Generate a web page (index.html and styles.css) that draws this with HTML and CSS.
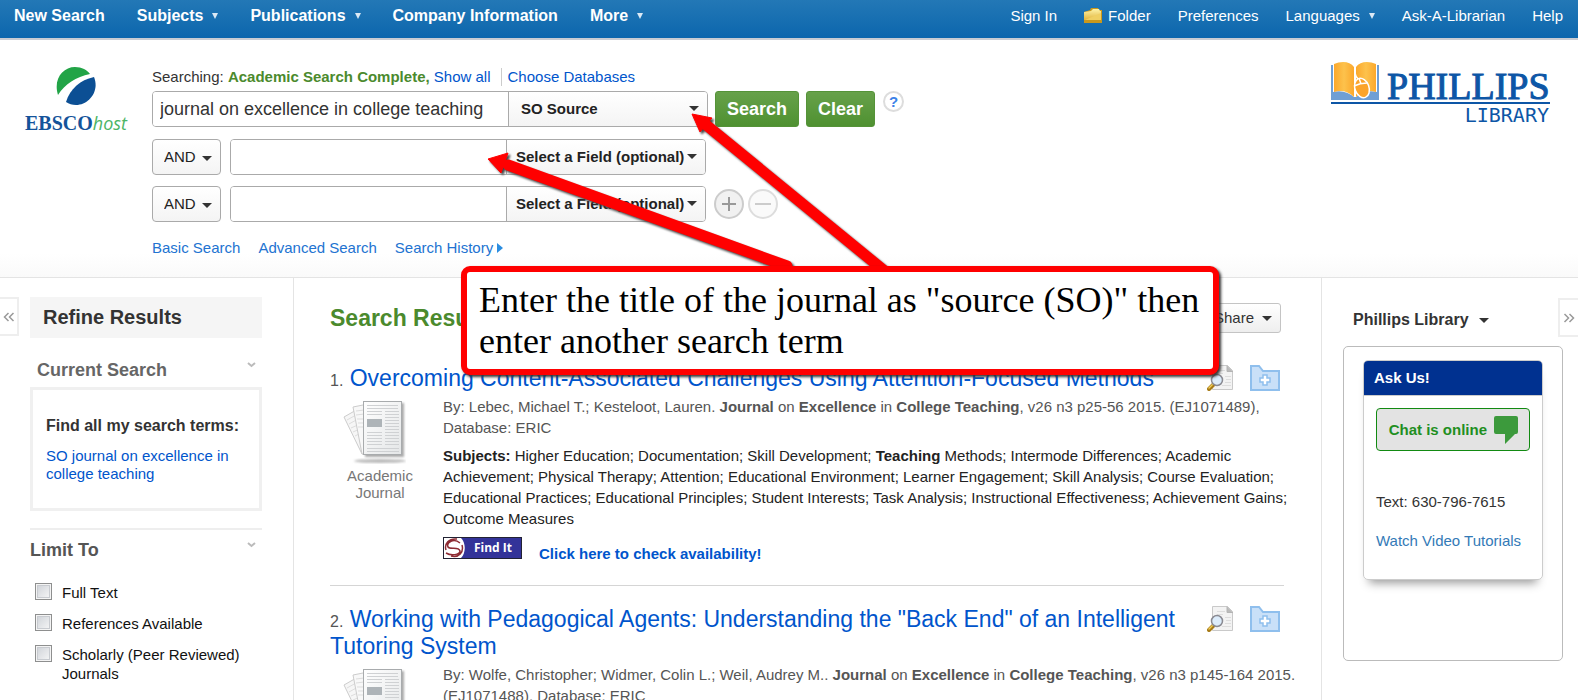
FILE: index.html
```html
<!DOCTYPE html>
<html lang="en">
<head>
<meta charset="utf-8">
<title>Search Results - EBSCOhost</title>
<link rel="stylesheet" href="styles.css">
</head>
<body>
<svg class="defs" width="0" height="0" aria-hidden="true">
  <defs>
    <linearGradient id="paper" x1="0" y1="0" x2="1" y2="1"><stop offset="0" stop-color="#fff"/><stop offset="1" stop-color="#e4e6e7"/></linearGradient>
    <linearGradient id="gold" x1="0" y1="0" x2="0" y2="1"><stop offset="0" stop-color="#fdf3a8"/><stop offset="1" stop-color="#e2b43a"/></linearGradient>
    <linearGradient id="amber" x1="0" y1="0" x2="1" y2="0"><stop offset="0" stop-color="#fba82d"/><stop offset=".5" stop-color="#fdc24c"/><stop offset="1" stop-color="#fba82d"/></linearGradient>
    <filter id="soft" x="-20%" y="-20%" width="140%" height="140%"><feGaussianBlur stdDeviation="1"/></filter>
    <symbol id="journal" viewBox="0 0 64 64">
      <ellipse cx="38" cy="61" rx="26" ry="2" fill="#bbb" filter="url(#soft)"/>
      <path d="M2 17 16 9 32 51 20 54Z" fill="#f6f6f6" stroke="#ccc"/>
      <path d="M5 20l9-5M7 24l9-5M9 28l9-4M11 32l9-4M13 36l8-4" stroke="#ddd"/>
      <path d="M11 7 26 4 32 53 20 54Z" fill="#f8f8f8" stroke="#ccc"/>
      <path d="M14 11l8-1M14 15l8-1M15 19h8M16 23h8M16 27h8" stroke="#ddd"/>
      <rect x="23" y="3" width="39" height="54" fill="#aaa" filter="url(#soft)"/>
      <rect x="21.5" y="1.500" width="38" height="53" fill="url(#paper)" stroke="#a8abad"/>
      <path d="M25 5.500h31M25 8.500h31M25 11.500h15M25 14.500h15M25 32.500h15M25 35.500h15M25 38.500h15M25 41.500h15M25 44.500h15M43 11.500h14M43 14.500h14M43 17.500h14M43 20.500h14M43 23.500h14M43 26.500h14M43 29.500h14M43 32.500h14M43 35.500h14M43 38.500h14M43 41.500h14M43 44.500h14M25 48.500h32M25 51.500h32" stroke="#cfd1d3"/>
      <rect x="25" y="19" width="15" height="8" fill="#aeb4b8"/>
    </symbol>
    <symbol id="preview" viewBox="0 0 27 26">
      <path d="M5.500.5h15l5 5v19h-20Z" fill="#f3f3f3" stroke="#c9c9c9"/>
      <path d="M20 .5v6h6" fill="#bbb" stroke="#b4b4b4"/>
      <path d="M10 5.500h8M10 8.500h6M18 11.500h6M19 14.500h5M18 17.500h6M15 20.500h9" stroke="#ddd"/>
      <path d="M7 19 2 24" stroke="#a77b16" stroke-width="4" stroke-linecap="round"/>
      <path d="M6.500 18.500 2 23" stroke="#f0cd5a" stroke-width="1.500" stroke-linecap="round"/>
      <circle cx="10" cy="15" r="5.500" fill="#dcecfb" stroke="#8a8a92" stroke-width="1.500"/>
    </symbol>
    <symbol id="add-folder" viewBox="0 0 30 26">
      <path d="M1 1h8l4 5h16v19H1Z" fill="#c9e0f8" stroke="#8fbfed" stroke-width="2"/>
      <path d="M13 10h4v3h3v4h-3v3h-4v-3h-3v-4h3Z" fill="#fff" stroke="#8fbfed" stroke-width="1.500"/>
    </symbol>
  </defs>
</svg>
<div class="page">
  <nav class="topbar">
    <div class="topbar-group">
      <a href="#">New Search</a>
      <a href="#">Subjects<span class="tri"></span></a>
      <a href="#">Publications<span class="tri"></span></a>
      <a href="#">Company Information</a>
      <a href="#">More<span class="tri"></span></a>
    </div>
    <div class="topbar-group tools">
      <a href="#">Sign In</a>
      <a href="#" class="folder"><svg width="18" height="17" viewBox="0 0 18 17"><path d="M0 5 6 3l1-2h7l1 2h3v13H0Z" fill="#c9981c"/><path d="M0 5 7 4l2-2h6l1 2h1v9H0Z" fill="url(#gold)"/><path d="M1 13 17 6v7Z" fill="#efcf62"/></svg>Folder</a>
      <a href="#">Preferences</a>
      <a href="#">Languages<span class="tri"></span></a>
      <a href="#">Ask-A-Librarian</a>
      <a href="#">Help</a>
    </div>
  </nav>

  <header class="header">
    <a href="#" class="ebsco" aria-label="EBSCOhost">
      <svg width="40" height="40" viewBox="0 0 40 40"><path d="M2 29C-3 13 7 1 19 1c7 0 12 3 15 7C20 11 9 18 2 29Z" fill="#22a447"/><path d="M38 11c6 15-6 28-18 28-4 0-7-1-10-3 4-13 14-22 28-25Z" fill="#0c4f94"/></svg>
      <span class="ebsco-name"><b>EBSCO</b><i>host</i></span>
    </a>
    <form class="search">
      <div class="databases"><span>Searching: <strong>Academic Search Complete,</strong> <a href="#">Show all</a></span><a href="#" class="choose">Choose Databases</a></div>
      <div class="row">
        <div class="combo first">
          <input type="text" aria-label="Search term 1" value="journal on excellence in college teaching">
          <span class="pick"><select aria-label="Field 1"><option>SO Source</option></select></span>
        </div>
        <button type="submit" class="go">Search</button>
        <button type="reset" class="go">Clear</button>
        <button type="button" class="help" aria-label="Help">?</button>
      </div>
      <div class="row">
        <span class="pick bool"><select aria-label="Operator 2"><option>AND</option></select></span>
        <div class="combo">
          <input type="text" aria-label="Search term 2">
          <span class="pick"><select aria-label="Field 2"><option>Select a Field (optional)</option></select></span>
        </div>
      </div>
      <div class="row">
        <span class="pick bool"><select aria-label="Operator 3"><option>AND</option></select></span>
        <div class="combo">
          <input type="text" aria-label="Search term 3">
          <span class="pick"><select aria-label="Field 3"><option>Select a Field (optional)</option></select></span>
        </div>
        <button type="button" class="round" aria-label="Add row"><svg width="16" height="16" viewBox="0 0 16 16"><path d="M8 1v14M1 8h14" stroke="#999" stroke-width="2"/></svg></button>
        <button type="button" class="round off" aria-label="Remove row" disabled><svg width="16" height="16" viewBox="0 0 16 16"><path d="M0 8h16" stroke="#ccc" stroke-width="2"/></svg></button>
      </div>
      <div class="modes"><a href="#">Basic Search</a><a href="#">Advanced Search</a><a href="#">Search History<span class="right-tri"></span></a></div>
    </form>
    <a href="#" class="phillips" aria-label="Phillips Library">
      <svg width="220" height="68" viewBox="0 0 220 68">
        <path d="M0 3h48v35H0Z" fill="#6f9fd4"/>
        <path d="M2 1h44v34H2Z" fill="#fff"/>
        <path d="M2 30c8-2 16 0 22 6 6-6 14-8 22-6v8H2Z" fill="#6f9fd4"/>
        <path d="M3 2c7-3 16-3 20 3v30C17 29 10 28 3 30Z" fill="url(#amber)"/>
        <path d="M45 2c-7-3-16-3-20 3v30c6-6 13-7 20-5Z" fill="url(#amber)"/>
        <path d="M24 4c-1 6 0 10 3 13" fill="none" stroke="#fff" stroke-width="1.500"/>
        <ellipse cx="31" cy="26" rx="7" ry="10" transform="rotate(-20 31 26)" fill="#fba42a" stroke="#fff" stroke-width="1.500"/>
        <path d="M23 24c4-2 8-3 13-3M28 16l2 6" fill="none" stroke="#fff" stroke-width="1.500"/>
        <path d="M0 41h219" stroke="#0d56a6" stroke-width="2"/>
        <text x="56" y="37" class="logo-serif">PHILLIPS</text>
        <text x="218" y="60" class="logo-sans">LIBRARY</text>
      </svg>
    </a>
  </header>

  <div class="columns">
    <aside class="sidebar">
      <button type="button" class="tab" aria-label="Hide panel"><svg width="12" height="10" viewBox="0 0 12 10"><path d="M5.500 1 1.500 5l4 4M10.500 1l-4 4 4 4" fill="none" stroke="#999" stroke-width="1.500"/></svg></button>
      <div class="refine">
        <h2 class="refine-title">Refine Results</h2>
        <h3 class="facet inset">Current Search<svg width="9" height="6" viewBox="0 0 9 6"><path d="M1 1l3.500 3L8 1" fill="none" stroke="#bbb" stroke-width="2"/></svg></h3>
        <div class="terms">
          <h4>Find all my search terms:</h4>
          <a href="#">SO journal on excellence in college teaching</a>
        </div>
        <h3 class="facet limit">Limit To<svg width="9" height="6" viewBox="0 0 9 6"><path d="M1 1l3.500 3L8 1" fill="none" stroke="#bbb" stroke-width="2"/></svg></h3>
        <div class="checks">
          <label><input type="checkbox">Full Text</label>
          <label><input type="checkbox">References Available</label>
          <label><input type="checkbox">Scholarly (Peer Reviewed) Journals</label>
        </div>
      </div>
    </aside>

    <main class="results">
      <div class="results-head"><h1>Search Results</h1><button type="button" class="share">Share<span class="caret"></span></button></div>
      <article class="result">
        <div class="title-row">
          <h2><span class="num">1.</span> <a href="#">Overcoming Content-Associated Challenges Using Attention-Focused Methods</a></h2>
          <div class="acts"><a href="#" aria-label="Preview"><svg width="27" height="26"><use href="#preview"/></svg></a><a href="#" aria-label="Add to folder"><svg width="30" height="26"><use href="#add-folder"/></svg></a></div>
        </div>
        <div class="body">
          <div class="kind"><svg width="64" height="64"><use href="#journal"/></svg>Academic<br>Journal</div>
          <div class="detail">
            <p class="by">By: Lebec, Michael T.; Kesteloot, Lauren. <b>Journal</b> on <b>Excellence</b> in <b>College</b> <b>Teaching</b>, v26 n3 p25-56 2015. (EJ1071489), Database: ERIC</p>
            <p class="subjects"><b>Subjects:</b> Higher Education; Documentation; Skill Development; <b>Teaching</b> Methods; Intermode Differences; Academic Achievement; Physical Therapy; Attention; Educational Environment; Learner Engagement; Skill Analysis; Course Evaluation; Educational Practices; Educational Principles; Student Interests; Task Analysis; Instructional Effectiveness; Achievement Gains; Outcome Measures</p>
            <div class="find"><a href="#" class="findit"><svg width="21" height="20" viewBox="0 0 21 20"><path d="M0 0h17c5 5 5 15 0 20H0Z" fill="#fff"/><path d="M16 5C10 0 2 4 4 9c2 3 11-1 12 4 0 4-9 5-14 2M13 1C5 0 0 6 2 12M7 18c8 2 13-4 11-11" fill="none" stroke="#8d2b33" stroke-width="1.500"/></svg><span>Find It</span></a><a href="#" class="avail">Click here to check availability!</a></div>
          </div>
        </div>
      </article>
      <article class="result">
        <div class="title-row">
          <h2><span class="num">2.</span> <a href="#">Working with Pedagogical Agents: Understanding the "Back End" of an Intelligent Tutoring System</a></h2>
          <div class="acts"><a href="#" aria-label="Preview"><svg width="27" height="26"><use href="#preview"/></svg></a><a href="#" aria-label="Add to folder"><svg width="30" height="26"><use href="#add-folder"/></svg></a></div>
        </div>
        <div class="body">
          <div class="kind"><svg width="64" height="64"><use href="#journal"/></svg></div>
          <div class="detail">
            <p class="by">By: Wolfe, Christopher; Widmer, Colin L.; Weil, Audrey M.. <b>Journal</b> on <b>Excellence</b> in <b>College</b> <b>Teaching</b>, v26 n3 p145-164 2015. (EJ1071488), Database: ERIC</p>
          </div>
        </div>
      </article>
    </main>

    <aside class="library">
      <div class="library-head"><h2>Phillips Library<span class="caret"></span></h2><button type="button" class="tab" aria-label="Hide panel"><svg width="12" height="10" viewBox="0 0 12 10"><path d="M1.500 1l4 4-4 4M6.500 1l4 4-4 4" fill="none" stroke="#999" stroke-width="1.500"/></svg></button></div>
      <div class="widget">
        <section class="ask">
          <h3>Ask Us!</h3>
          <div class="ask-body">
            <button type="button" class="chat">Chat is online<svg width="24" height="28" viewBox="0 0 24 28"><path d="M2 0h20q2 0 2 2v14q0 2-2 2h-1L11 28V18H2q-2 0-2-2V2q0-2 2-2Z" fill="#3c9a3c"/></svg></button>
            <p>Text: 630-796-7615</p>
            <a href="#">Watch Video Tutorials</a>
          </div>
        </section>
      </div>
    </aside>
  </div>

  <svg class="arrows" width="440" height="180" viewBox="0 0 440 180" aria-hidden="true">
    <g fill="#f00" stroke="#f00">
      <path d="M245 14 438 172" stroke-width="11"/>
      <path d="M48 55 327 156" stroke-width="11" stroke-linecap="round"/>
      <path d="M232 4l20 4-12 14Z" stroke-linejoin="round"/>
      <path d="M28 49 48 43 41 63Z" stroke-linejoin="round"/>
    </g>
  </svg>
  <div class="callout">Enter the title of the journal as "source (SO)" then enter another search term</div>
</div>
</body>
</html>
```
FILE: styles.css
```css
* { box-sizing: border-box; }
body { margin: 0; background: #fff; color: #333; font: 15px/18px "Liberation Sans", Arial, sans-serif; }
h1, h2, h3, h4, p { margin: 0; }
a { color: #05c; text-decoration: none; }
button, input, select { font: inherit; color: inherit; margin: 0; }
svg { display: block; }
.defs { position: absolute; }
.page { position: relative; height: 100vh; overflow: hidden; }

.topbar { display: flex; justify-content: space-between; height: 40px; padding: 7px 15px 0 14px; background: linear-gradient(#2378b6, #0c66ad); border-bottom: 2px solid #c9ccd3; }
.topbar-group { display: flex; gap: 32px; font-size: 16px; font-weight: bold; }
.topbar a { display: flex; height: 18px; color: #fff; white-space: nowrap; }
.topbar .tools { gap: 27px; font-size: 15px; font-weight: normal; }
.topbar .folder { gap: 6px; }
.tri { align-self: center; margin-left: 9px; border: solid transparent; border-width: 6px 3px 0; border-top-color: #dbe9f5; }

.header { display: flex; height: 238px; padding: 22px 27px 0 25px; background: linear-gradient(#fff 90%, #fafafa); border-bottom: 1px solid #e4e4e4; }
.ebsco { display: flex; flex-direction: column; align-items: center; width: 102px; margin-right: 25px; padding-top: 4px; }
.ebsco-name { margin-top: 5px; font: 20px/24px "Liberation Serif", serif; color: #14539a; }
.ebsco-name i { font: italic 18px/24px "Open Sans", sans-serif; color: #4cb565; }
.search { flex: 1; }
.databases { display: flex; align-items: center; height: 29px; padding-top: 1px; white-space: nowrap; }
.databases strong { color: #4b8a2d; }
.choose { margin-left: 10px; padding-left: 6px; border-left: 1px solid #ccc; }
.row { display: flex; height: 36px; margin-bottom: 12px; }
.row + .row { margin-bottom: 11px; }
.combo { display: flex; width: 476px; border: 1px solid #aaa; border-radius: 4px; background: #fff; overflow: hidden; }
.combo.first { width: 556px; margin-right: 7px; }
.combo input { flex: 1; min-width: 0; padding: 0 7px; border: 0; font-size: 18px; outline: 0; }
.combo .pick { width: 199px; border-left: 1px solid #aaa; }
.pick { position: relative; display: flex; background: linear-gradient(#fff, #f4f4f4); }
.pick::after { content: ""; position: absolute; right: 8px; top: 14px; border: solid transparent; border-width: 5px 5px 0; border-top-color: #333; pointer-events: none; }
.pick select { flex: 1; min-width: 0; padding: 0 9px; border: 0; appearance: none; background: none; font-weight: bold; color: #222; }
.first .pick select { padding-left: 12px; }
.bool { width: 69px; margin-right: 9px; border: 1px solid #aaa; border-radius: 4px; }
.bool::after { top: 16px; }
.bool select { padding: 0 0 0 11px; font-weight: normal; }
.go { margin-right: 7px; padding: 0 11px; border: 1px solid #559338; border-radius: 3px; background: linear-gradient(#67a14a, #4f9131); color: #fff; font-size: 18px; font-weight: bold; }
.help { width: 21px; height: 21px; margin-left: 1px; padding: 0; border: 2px solid #ddd; border-radius: 50%; background: #fff; color: #3b82e8; font-weight: bold; line-height: 16px; }
.round { display: grid; place-items: center; align-self: center; width: 30px; height: 30px; margin-left: 8px; padding: 0; border: 2px solid #ccc; border-radius: 50%; background: #f1f1f1; }
.round.off { margin-left: 4px; border-color: #ddd; background: #fafafa; }
.modes { display: flex; gap: 18px; padding-top: 6px; }
.modes a { display: flex; align-items: center; color: #2273d1; }
.right-tri { margin-left: 4px; border: solid transparent; border-width: 5px 0 5px 6px; border-left-color: #2b8de0; }
.logo-serif { font: 38px "Liberation Serif", serif; fill: #0d56a6; stroke: #0d56a6; stroke-width: 1px; }
.logo-sans { font: 20px "DejaVu Sans Mono", monospace; fill: #0d56a6; text-anchor: end; }

.columns { display: grid; grid-template-columns: 294px 1fr 257px; height: 100%; }
.sidebar { display: flex; align-items: flex-start; gap: 11px; padding: 19px 31px 0 0; border-right: 1px solid #e4e4e4; }
.tab { display: grid; place-items: center; width: 19px; height: 39px; padding: 0; border: 2px solid #eee; border-left: 0; background: #fff; }
.refine { flex: 1; }
.refine-title { padding: 0 13px; background: #f5f5f5; font-size: 20px; line-height: 41px; }
.facet { display: flex; justify-content: space-between; padding: 20px 6px 5px 0; color: #555; font-size: 18px; line-height: 24px; }
.facet.inset { padding-left: 7px; color: #666; }
.facet svg { margin-top: 4px; }
.facet.limit { margin-top: 17px; padding: 8px 6px 0 0; border-top: 2px solid #eee; }
.terms { height: 124px; padding: 26px 13px; border: 3px solid #f0f0f0; }
.terms h4 { margin-bottom: 11px; font-size: 16px; line-height: 20px; white-space: nowrap; }
.terms a { display: block; }
.checks { display: flex; flex-direction: column; gap: 12px; padding: 21px 0 0 5px; color: #111; }
.checks label { display: flex; gap: 10px; line-height: 19px; }
.checks input { flex: none; width: 17px; height: 17px; margin: 0; appearance: none; border: 1px solid #8e8f8f; background: linear-gradient(135deg, #ccd0d6, #f8f8f8); box-shadow: inset 0 0 0 1px #f4f4f4, inset 0 0 0 2px #c8cbd0; }

.results { padding: 25px 37px 0 36px; }
.results-head { display: flex; justify-content: space-between; padding-right: 3px; }
.results-head h1 { color: #4b8a2d; font-size: 23px; line-height: 30px; }
.share { display: flex; align-items: center; height: 30px; padding: 0 8px; border: 1px solid #c4c4c4; border-radius: 3px; background: linear-gradient(#fff, #eee); }
.caret { display: inline-block; margin-left: 8px; border: solid transparent; border-width: 5px 5px 0; border-top-color: #333; }
.result { padding: 32px 0 21px; border-bottom: 1px solid #d5d5d5; }
.result + .result { padding-top: 20px; border: 0; }
.title-row { display: flex; justify-content: space-between; }
.title-row h2 { font-size: 23px; font-weight: normal; line-height: 27px; }
.num { color: #555; font-size: 16px; line-height: 16px; }
.acts { flex: none; display: flex; gap: 16px; padding-right: 4px; }
.body { display: flex; margin-top: 4px; }
.kind { width: 100px; margin-right: 13px; padding: 4px 0 0; text-align: center; color: #777; line-height: 17px; }
.kind svg { margin: 0 0 3px 12px; }
.detail { flex: 1; margin-right: -20px; line-height: 21px; }
.by { color: #555; }
.subjects { margin-top: 7px; color: #222; }
.find { display: flex; align-items: flex-start; gap: 17px; margin-top: 8px; font-weight: bold; }
.findit { display: flex; align-items: center; width: 79px; height: 22px; border: 1px solid #223; background: #333399; color: #fff; font: bold 12px/20px "Open Sans", sans-serif; }
.findit span { flex: 1; text-align: center; }
.avail { padding-top: 6px; }

.library { padding: 20px 0 0 21px; border-left: 1px solid #e4e4e4; }
.library-head { display: flex; justify-content: space-between; margin-bottom: 4px; padding-left: 10px; }
.library-head h2 { font-size: 16px; line-height: 44px; }
.library-head .caret { margin-left: 10px; vertical-align: middle; }
.library .tab { width: 20px; border: 2px solid #eee; border-right: 0; }
.widget { height: 315px; margin-right: 15px; padding: 13px 19px; border: 1px solid #bbb; border-radius: 5px; }
.ask { height: 220px; border: 1px solid #ccc; border-radius: 5px; box-shadow: 0 9px 9px -6px #999; overflow: hidden; }
.ask h3 { padding: 0 10px; background: #003190; color: #fff; font-size: 15px; line-height: 34px; border-bottom: 1px solid #ccc; }
.ask-body { padding: 12px; }
.chat { display: flex; align-items: center; justify-content: flex-end; gap: 7px; width: 100%; height: 43px; padding: 0 11px 0 0; border: 1px solid #128a12; border-radius: 4px; background: #e3e3e3; color: #1f8f1f; font-weight: bold; }
.ask-body p { margin: 42px 0 21px; }
.ask-body a { color: #337ab7; }

.arrows { position: absolute; left: 460px; top: 110px; filter: drop-shadow(2px 2px 1px #444); }
.callout { position: absolute; left: 461px; top: 266px; width: 758px; height: 109px; padding: 8px 12px; border: 6px solid #f00; border-radius: 9px; background: #fff; box-shadow: 2px 2px 3px #333; color: #000; font: 36px/41px "Liberation Serif", serif; }
```
